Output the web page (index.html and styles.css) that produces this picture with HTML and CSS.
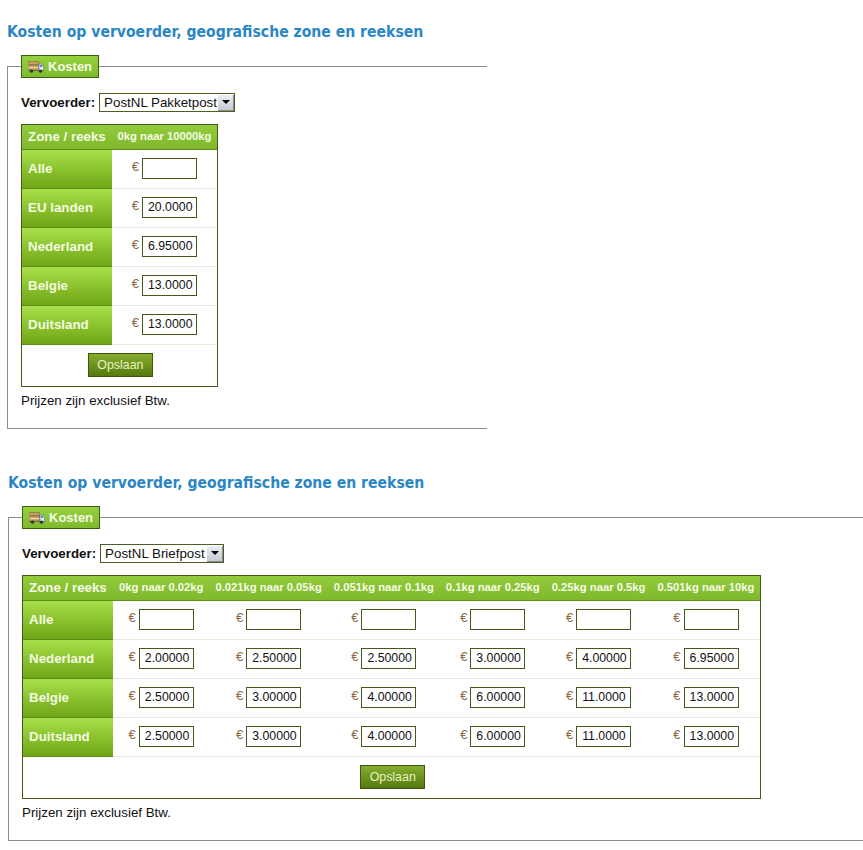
FILE: index.html
```html
<!DOCTYPE html>
<html lang="nl">
<head>
<meta charset="utf-8">
<title>Kosten</title>
<link rel="stylesheet" href="styles.css">
</head>
<body>
<section class="block block-a">
  <h2 class="title">Kosten op vervoerder, geografische zone en reeksen</h2>
  <fieldset class="panel">
    <legend class="tab"><svg class="truck" width="16" height="12" viewBox="0 0 16 12"><rect x="0" y="0.5" width="10.5" height="8.5" fill="#c9a25a" stroke="#7a6a4a" stroke-width="0.6"/><rect x="0.5" y="3" width="10" height="1.5" fill="#8a7a5a"/><rect x="0.5" y="6" width="10" height="1.2" fill="#e8d9a0"/><path d="M11 3h2.6L15.6 6v3.5H11z" fill="#dfe8f4" stroke="#55688a" stroke-width="0.6"/><rect x="12" y="4" width="1.8" height="2" fill="#5a86c0"/><rect x="0" y="9" width="15.6" height="1" fill="#666"/><circle cx="3.5" cy="10.2" r="1.6" fill="#333"/><circle cx="12.5" cy="10.2" r="1.6" fill="#333"/></svg>Kosten</legend>
    <div class="carrier">
      <label class="carrier-label" for="c1">Vervoerder:</label>
      <span class="select-wrap select-a">
        <select id="c1" class="select"><option>PostNL Pakketpost</option></select>
        <span class="select-btn"><span class="caret"></span></span>
      </span>
    </div>
    <table class="grid">
      <thead><tr><th class="corner">Zone / reeks</th><th class="range">0kg naar 10000kg</th></tr></thead>
      <tbody>
        <tr><th class="zone">Alle</th><td class="cost"><span class="eur">€</span><input class="price" value=""></td></tr>
        <tr><th class="zone">EU landen</th><td class="cost"><span class="eur">€</span><input class="price" value="20.0000"></td></tr>
        <tr><th class="zone">Nederland</th><td class="cost"><span class="eur">€</span><input class="price" value="6.95000"></td></tr>
        <tr><th class="zone">Belgie</th><td class="cost"><span class="eur">€</span><input class="price" value="13.0000"></td></tr>
        <tr><th class="zone">Duitsland</th><td class="cost"><span class="eur">€</span><input class="price" value="13.0000"></td></tr>
        <tr><td class="actions" colspan="2"><button class="save" type="button">Opslaan</button></td></tr>
      </tbody>
    </table>
    <p class="note">Prijzen zijn exclusief Btw.</p>
  </fieldset>
</section>
<section class="block block-b">
  <h2 class="title">Kosten op vervoerder, geografische zone en reeksen</h2>
  <fieldset class="panel">
    <legend class="tab"><svg class="truck" width="16" height="12" viewBox="0 0 16 12"><rect x="0" y="0.5" width="10.5" height="8.5" fill="#c9a25a" stroke="#7a6a4a" stroke-width="0.6"/><rect x="0.5" y="3" width="10" height="1.5" fill="#8a7a5a"/><rect x="0.5" y="6" width="10" height="1.2" fill="#e8d9a0"/><path d="M11 3h2.6L15.6 6v3.5H11z" fill="#dfe8f4" stroke="#55688a" stroke-width="0.6"/><rect x="12" y="4" width="1.8" height="2" fill="#5a86c0"/><rect x="0" y="9" width="15.6" height="1" fill="#666"/><circle cx="3.5" cy="10.2" r="1.6" fill="#333"/><circle cx="12.5" cy="10.2" r="1.6" fill="#333"/></svg>Kosten</legend>
    <div class="carrier">
      <label class="carrier-label" for="c2">Vervoerder:</label>
      <span class="select-wrap select-b">
        <select id="c2" class="select"><option>PostNL Briefpost</option></select>
        <span class="select-btn"><span class="caret"></span></span>
      </span>
    </div>
    <table class="grid">
      <thead><tr><th class="corner">Zone / reeks</th><th class="range">0kg naar 0.02kg</th><th class="range">0.021kg naar 0.05kg</th><th class="range">0.051kg naar 0.1kg</th><th class="range">0.1kg naar 0.25kg</th><th class="range">0.25kg naar 0.5kg</th><th class="range">0.501kg naar 10kg</th></tr></thead>
      <tbody>
        <tr><th class="zone">Alle</th><td class="cost"><span class="eur">€</span><input class="price" value=""></td><td class="cost"><span class="eur">€</span><input class="price" value=""></td><td class="cost"><span class="eur">€</span><input class="price" value=""></td><td class="cost"><span class="eur">€</span><input class="price" value=""></td><td class="cost"><span class="eur">€</span><input class="price" value=""></td><td class="cost"><span class="eur">€</span><input class="price" value=""></td></tr>
        <tr><th class="zone">Nederland</th><td class="cost"><span class="eur">€</span><input class="price" value="2.00000"></td><td class="cost"><span class="eur">€</span><input class="price" value="2.50000"></td><td class="cost"><span class="eur">€</span><input class="price" value="2.50000"></td><td class="cost"><span class="eur">€</span><input class="price" value="3.00000"></td><td class="cost"><span class="eur">€</span><input class="price" value="4.00000"></td><td class="cost"><span class="eur">€</span><input class="price" value="6.95000"></td></tr>
        <tr><th class="zone">Belgie</th><td class="cost"><span class="eur">€</span><input class="price" value="2.50000"></td><td class="cost"><span class="eur">€</span><input class="price" value="3.00000"></td><td class="cost"><span class="eur">€</span><input class="price" value="4.00000"></td><td class="cost"><span class="eur">€</span><input class="price" value="6.00000"></td><td class="cost"><span class="eur">€</span><input class="price" value="11.0000"></td><td class="cost"><span class="eur">€</span><input class="price" value="13.0000"></td></tr>
        <tr><th class="zone">Duitsland</th><td class="cost"><span class="eur">€</span><input class="price" value="2.50000"></td><td class="cost"><span class="eur">€</span><input class="price" value="3.00000"></td><td class="cost"><span class="eur">€</span><input class="price" value="4.00000"></td><td class="cost"><span class="eur">€</span><input class="price" value="6.00000"></td><td class="cost"><span class="eur">€</span><input class="price" value="11.0000"></td><td class="cost"><span class="eur">€</span><input class="price" value="13.0000"></td></tr>
        <tr><td class="actions" colspan="7"><button class="save" type="button">Opslaan</button></td></tr>
      </tbody>
    </table>
    <p class="note">Prijzen zijn exclusief Btw.</p>
  </fieldset>
</section>
</body>
</html>
```
FILE: styles.css
```css
* { box-sizing: border-box; }
html, body { overflow-x: hidden; }
body {
  margin: 0;
  background: #fff;
  color: #111;
  font-family: "Liberation Sans", Arial, sans-serif;
  font-size: 13.33px;
}
.block { display: block; }
.block-a { width: 480px; margin: 0 0 0 7px; padding-top: 23px; }
.block-b { width: 855px; margin: 0 0 0 8px; padding-top: 45px; }
.title {
  margin: 0 0 14px;
  color: #2a86c4;
  font-family: "DejaVu Sans Condensed", "DejaVu Sans", Verdana, sans-serif;
  font-size: 15.6px;
  font-weight: bold;
  line-height: 18px;
}
.panel {
  margin: 0;
  min-width: 0;
  padding: 0 0 20px 13px;
  border: 1px solid #8c8c8c;
  border-right: none;
}
.tab {
  display: flex;
  align-items: center;
  height: 23px;
  padding: 0 6px 0 6px;
  border: 1px solid #3f5f12;
  background: linear-gradient(#96d03e, #7ebb2c);
  color: #f6fbe6;
  font-size: 13px;
  font-weight: bold;
}
.truck { margin-right: 4px; }
.carrier {
  display: flex;
  align-items: center;
  gap: 4px;
  margin-top: 14px;
  height: 20px;
}
.carrier-label { font-weight: bold; color: #111; }
.select-wrap { position: relative; display: block; height: 19px; }
.select-a { width: 136px; }
.select-b { width: 124px; }
.select {
  display: block;
  width: 100%;
  height: 19px;
  padding: 0 0 0 4px;
  appearance: none;
  border: 1px solid #4a5f22;
  border-radius: 0;
  background: #fff;
  color: #111;
  font-family: "Liberation Sans", Arial, sans-serif;
  font-size: 13.33px;
}
.select-btn {
  position: absolute;
  top: 1px;
  right: 1px;
  display: flex;
  align-items: center;
  justify-content: center;
  width: 17px;
  height: 17px;
  background: linear-gradient(#eef0f4, #c4c8d0);
  box-shadow: inset 1px 1px 0 #fff, inset -1px -1px 0 #8a8a8a;
}
.caret {
  width: 0;
  height: 0;
  border-left: 4px solid transparent;
  border-right: 4px solid transparent;
  border-top: 4px solid #000;
}
.grid {
  margin-top: 12px;
  border: 1px solid #45591a;
  border-collapse: separate;
  border-spacing: 0;
  background: #fff;
}
.corner, .range {
  height: 25px;
  background: linear-gradient(#92cc3c, #7fb82c);
  border-bottom: 1px solid #5f8a1c;
  color: #f6fbe6;
  font-weight: bold;
  padding: 0 6px 2px;
  white-space: nowrap;
  text-align: center;
}
.corner { width: 90px; padding-right: 5px; font-size: 13.33px; text-align: left; }
.range { font-size: 11.25px; }
.block-a .range { padding: 0 5.5px 2px; }
.zone {
  height: 39px;
  padding: 0 6px 2px;
  background: linear-gradient(#a8df4a, #70a616);
  border-bottom: 1px solid #5f8a1c;
  color: #f4fbe0;
  font-size: 13.33px;
  font-weight: bold;
  text-align: left;
  white-space: nowrap;
}
.cost {
  height: 39px;
  padding: 0 0 2px;
  border-bottom: 1px solid #ece8da;
  text-align: center;
  white-space: nowrap;
}
.eur { margin-right: 3px; color: #8c6a44; font-size: 13px; vertical-align: 1px; }
.price {
  width: 55px;
  height: 21px;
  padding: 0 0 0 5px;
  border: 1px solid #45591a;
  background: #fff;
  color: #111;
  font-family: "Liberation Sans", Arial, sans-serif;
  font-size: 12.3px;
  vertical-align: middle;
}
.actions { height: 41px; padding: 0 0 1px 2px; text-align: center; }
.save {
  display: inline-block;
  width: 65px;
  height: 24px;
  padding: 0;
  border: 1px solid #3f5512;
  background: linear-gradient(#86ad2e, #557a10);
  color: #e8f4c0;
  font-family: "Liberation Sans", Arial, sans-serif;
  font-size: 12.4px;
  vertical-align: middle;
}
.note { margin: 6px 0 0; line-height: 15px; color: #111; }
```
